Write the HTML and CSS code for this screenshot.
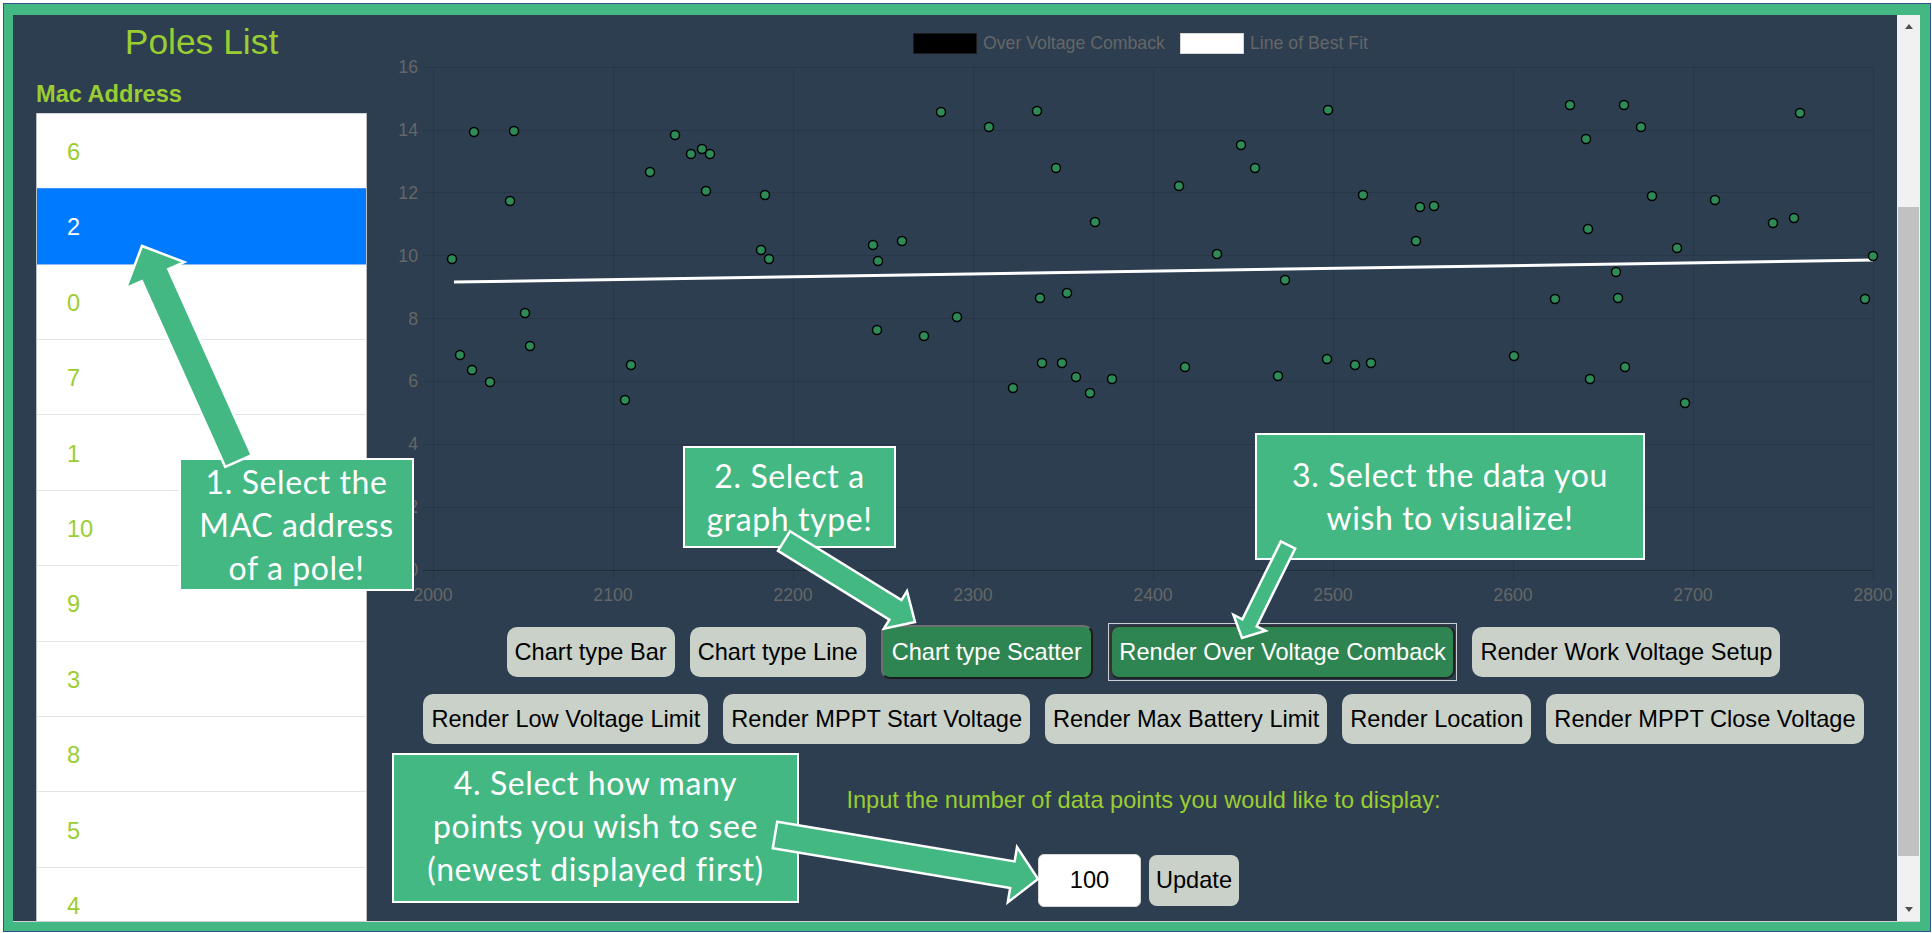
FILE: index.html
```html
<!DOCTYPE html>
<html lang="en">
<head>
<meta charset="utf-8">
<title>Poles List</title>
<link rel="stylesheet" href="styles.css">
</head>
<body>
<div class="frame">
  <div class="screen">
    <aside class="sidebar">
      <h2 class="title">Poles List</h2>
      <h3 class="mac-label">Mac Address</h3>
      <ul class="poles">
        <li class="pole">6</li>
        <li class="pole active">2</li>
        <li class="pole">0</li>
        <li class="pole">7</li>
        <li class="pole">1</li>
        <li class="pole">10</li>
        <li class="pole">9</li>
        <li class="pole">3</li>
        <li class="pole">8</li>
        <li class="pole">5</li>
        <li class="pole">4</li>
      </ul>
    </aside>
    <main class="main">
      <svg class="chart" width="1507" height="608" viewBox="0 0 1507 608">
        <g class="legend">
          <rect class="lg-black" x="523.5" y="18.5" width="63" height="20"/>
          <text class="tick" x="593" y="34">Over Voltage Comback</text>
          <rect class="lg-white" x="790.5" y="18.5" width="63" height="20"/>
          <text class="tick" x="860" y="34">Line of Best Fit</text>
        </g>
        <g class="grid">
          <line x1="33" y1="52.5" x2="1483" y2="52.5"/>
          <line x1="33" y1="115.5" x2="1483" y2="115.5"/>
          <line x1="33" y1="177.5" x2="1483" y2="177.5"/>
          <line x1="33" y1="240.5" x2="1483" y2="240.5"/>
          <line x1="33" y1="303.5" x2="1483" y2="303.5"/>
          <line x1="33" y1="366.5" x2="1483" y2="366.5"/>
          <line x1="33" y1="429.5" x2="1483" y2="429.5"/>
          <line x1="33" y1="492.5" x2="1483" y2="492.5"/>
          <line x1="43.5" y1="52" x2="43.5" y2="565"/>
          <line x1="223.5" y1="52" x2="223.5" y2="565"/>
          <line x1="403.5" y1="52" x2="403.5" y2="565"/>
          <line x1="583.5" y1="52" x2="583.5" y2="565"/>
          <line x1="763.5" y1="52" x2="763.5" y2="565"/>
          <line x1="943.5" y1="52" x2="943.5" y2="565"/>
          <line x1="1123.5" y1="52" x2="1123.5" y2="565"/>
          <line x1="1303.5" y1="52" x2="1303.5" y2="565"/>
          <line x1="1483.5" y1="52" x2="1483.5" y2="565"/>
        </g>
        <line class="axis" x1="33" y1="555.5" x2="1483" y2="555.5"/>
        <g class="ylabels">
          <text class="tick" x="28" y="58">16</text>
          <text class="tick" x="28" y="121">14</text>
          <text class="tick" x="28" y="184">12</text>
          <text class="tick" x="28" y="247">10</text>
          <text class="tick" x="28" y="310">8</text>
          <text class="tick" x="28" y="372">6</text>
          <text class="tick" x="28" y="435">4</text>
          <text class="tick" x="28" y="498">2</text>
          <text class="tick" x="28" y="561">0</text>
        </g>
        <g class="xlabels">
          <text class="tick" x="43" y="586">2000</text>
          <text class="tick" x="223" y="586">2100</text>
          <text class="tick" x="403" y="586">2200</text>
          <text class="tick" x="583" y="586">2300</text>
          <text class="tick" x="763" y="586">2400</text>
          <text class="tick" x="943" y="586">2500</text>
          <text class="tick" x="1123" y="586">2600</text>
          <text class="tick" x="1303" y="586">2700</text>
          <text class="tick" x="1483" y="586">2800</text>
        </g>
        <g class="points">
          <circle cx="62" cy="244" r="4.5"/><circle cx="70" cy="340" r="4.5"/><circle cx="82" cy="355" r="4.5"/>
          <circle cx="84" cy="117" r="4.5"/><circle cx="100" cy="367" r="4.5"/><circle cx="120" cy="186" r="4.5"/>
          <circle cx="124" cy="116" r="4.5"/><circle cx="135" cy="298" r="4.5"/><circle cx="140" cy="331" r="4.5"/>
          <circle cx="235" cy="385" r="4.5"/><circle cx="241" cy="350" r="4.5"/><circle cx="260" cy="157" r="4.5"/>
          <circle cx="285" cy="120" r="4.5"/><circle cx="301" cy="139" r="4.5"/><circle cx="312" cy="134" r="4.5"/>
          <circle cx="320" cy="139" r="4.5"/><circle cx="316" cy="176" r="4.5"/><circle cx="371" cy="235" r="4.5"/>
          <circle cx="375" cy="180" r="4.5"/><circle cx="379" cy="244" r="4.5"/><circle cx="483" cy="230" r="4.5"/>
          <circle cx="487" cy="315" r="4.5"/><circle cx="488" cy="246" r="4.5"/><circle cx="512" cy="226" r="4.5"/>
          <circle cx="534" cy="321" r="4.5"/><circle cx="551" cy="97" r="4.5"/><circle cx="567" cy="302" r="4.5"/>
          <circle cx="599" cy="112" r="4.5"/><circle cx="623" cy="373" r="4.5"/><circle cx="647" cy="96" r="4.5"/>
          <circle cx="650" cy="283" r="4.5"/><circle cx="652" cy="348" r="4.5"/><circle cx="666" cy="153" r="4.5"/>
          <circle cx="672" cy="348" r="4.5"/><circle cx="677" cy="278" r="4.5"/><circle cx="686" cy="362" r="4.5"/>
          <circle cx="700" cy="378" r="4.5"/><circle cx="705" cy="207" r="4.5"/><circle cx="722" cy="364" r="4.5"/>
          <circle cx="789" cy="171" r="4.5"/><circle cx="795" cy="352" r="4.5"/><circle cx="827" cy="239" r="4.5"/>
          <circle cx="851" cy="130" r="4.5"/><circle cx="865" cy="153" r="4.5"/><circle cx="888" cy="361" r="4.5"/>
          <circle cx="895" cy="265" r="4.5"/><circle cx="938" cy="95" r="4.5"/><circle cx="937" cy="344" r="4.5"/>
          <circle cx="965" cy="350" r="4.5"/><circle cx="973" cy="180" r="4.5"/><circle cx="981" cy="348" r="4.5"/>
          <circle cx="1026" cy="226" r="4.5"/><circle cx="1030" cy="192" r="4.5"/><circle cx="1044" cy="191" r="4.5"/>
          <circle cx="1124" cy="341" r="4.5"/><circle cx="1165" cy="284" r="4.5"/><circle cx="1180" cy="90" r="4.5"/>
          <circle cx="1196" cy="124" r="4.5"/><circle cx="1198" cy="214" r="4.5"/><circle cx="1200" cy="364" r="4.5"/>
          <circle cx="1226" cy="257" r="4.5"/><circle cx="1228" cy="283" r="4.5"/><circle cx="1234" cy="90" r="4.5"/>
          <circle cx="1235" cy="352" r="4.5"/><circle cx="1251" cy="112" r="4.5"/><circle cx="1262" cy="181" r="4.5"/>
          <circle cx="1287" cy="233" r="4.5"/><circle cx="1295" cy="388" r="4.5"/><circle cx="1325" cy="185" r="4.5"/>
          <circle cx="1383" cy="208" r="4.5"/><circle cx="1404" cy="203" r="4.5"/><circle cx="1410" cy="98" r="4.5"/>
          <circle cx="1475" cy="284" r="4.5"/>
        </g>
        <line class="fit" x1="64" y1="267" x2="1483" y2="245"/>
        <circle class="pt-last" cx="1483" cy="241" r="4.5"/>
      </svg>

      <div class="btn-row row-one">
        <button class="btn">Chart type Bar</button>
        <button class="btn">Chart type Line</button>
        <button class="btn btn-on">Chart type Scatter</button>
        <span class="focus-ring"><button class="btn btn-on btn-focus">Render Over Voltage Comback</button></span>
        <button class="btn">Render Work Voltage Setup</button>
      </div>
      <div class="btn-row row-two">
        <button class="btn">Render Low Voltage Limit</button>
        <button class="btn">Render MPPT Start Voltage</button>
        <button class="btn">Render Max Battery Limit</button>
        <button class="btn">Render Location</button>
        <button class="btn">Render MPPT Close Voltage</button>
      </div>
      <p class="prompt">Input the number of data points you would like to display:</p>
      <div class="input-row">
        <input class="count" type="text" value="100">
        <button class="btn btn-update">Update</button>
      </div>
    </main>
    <div class="scrollbar">
      <div class="sb-btn"><span class="tri-up"></span></div>
      <div class="sb-track"><div class="sb-thumb"></div></div>
      <div class="sb-btn"><span class="tri-down"></span></div>
    </div>
  </div>
</div>

<div class="callout c1">1. Select the<br>MAC address<br>of a pole!</div>
<div class="callout c2">2. Select a<br>graph type!</div>
<div class="callout c3">3. Select the data you<br>wish to visualize!</div>
<div class="callout c4">4. Select how many<br>points you wish to see<br>(newest displayed first)</div>

<svg class="arrows" width="1932" height="933" viewBox="0 0 1932 933">
  <polygon transform="translate(238.5 461) rotate(-114.17)" points="0,-14.5 203.7,-14.5 203.7,-32 235.7,0 203.7,32 203.7,14.5 0,14.5"/>
  <polygon transform="translate(784 541) rotate(31.73)" points="0,-11.5 131,-11.5 131,-22 154,0 131,22 131,11.5 0,11.5"/>
  <polygon transform="translate(1288 545) rotate(116.32)" points="0,-8 86.8,-8 86.8,-18 103.8,0 86.8,18 86.8,8 0,8"/>
  <polygon transform="translate(775 835) rotate(9.5)" points="0,-13.5 240.7,-13.5 240.7,-28 266.7,0 240.7,28 240.7,13.5 0,13.5"/>
</svg>
</body>
</html>
```

FILE: styles.css
```css
* { box-sizing: border-box; }

html, body {
  margin: 0;
  padding: 0;
}

body {
  width: 1932px;
  height: 933px;
  overflow: hidden;
  position: relative;
  background: #ffffff;
  font-family: "Liberation Sans", Arial, sans-serif;
}

.frame {
  margin: 3px 0 0 3px;
  width: 1928px;
  height: 929px;
  border: 1px solid #2f528f;
  background: #43b883;
  padding: 11px 10px 9px 9px;
}

.screen {
  display: flex;
  height: 907px;
  background: #2c3e50;
  border-bottom: 1px solid #cfd3d6;
  overflow: hidden;
}

/* ---------- sidebar ---------- */
.sidebar {
  width: 377px;
  flex: none;
  padding: 0 23px;
  overflow: hidden;
}

.title {
  margin: 6.6px 0 0;
  text-align: center;
  font-weight: normal;
  font-size: 35.4px;
  line-height: 40px;
  color: #9acd32;
}

.mac-label {
  margin: 19px 0 0;
  font-size: 23.6px;
  line-height: 27px;
  font-weight: bold;
  color: #9acd32;
}

.poles {
  list-style: none;
  margin: 5.3px 0 0;
  padding: 0;
  background: #fff;
  border-left: 1px solid #b9bec3;
  border-right: 1px solid #b9bec3;
}

.pole {
  height: 75.4px;
  display: flex;
  align-items: center;
  padding: 3px 0 0 30px;
  border-top: 1px solid #e4e4e4;
  font-size: 23.6px;
  line-height: 27px;
  color: #9acd32;
  background: #fff;
}

.pole:first-child { border-top-color: #d0d4d8; }

.pole.active {
  background: #007bff;
  color: #fff;
  border-top-color: #3d95fb;
}

.pole.active + .pole { border-top-color: #8bbcf5; }

/* ---------- main ---------- */
.main {
  width: 1507px;
  flex: none;
  display: flex;
  flex-direction: column;
  align-items: center;
}

.chart {
  display: block;
  flex: none;
}

.tick {
  font-family: "Liberation Sans", Arial, sans-serif;
  font-size: 17.7px;
  fill: #666666;
}

.ylabels .tick { text-anchor: end; }
.xlabels .tick { text-anchor: middle; }

.lg-black { fill: #000; stroke: #1c1c1c; stroke-width: 1; }
.lg-white { fill: #fff; stroke: #d6d6d6; stroke-width: 1; }

.grid line {
  stroke: rgba(0, 0, 0, 0.1);
  stroke-width: 1;
}

.axis {
  stroke: rgba(0, 0, 0, 0.28);
  stroke-width: 1;
}

.points circle,
.pt-last {
  fill: #2e8b57;
  stroke: #000;
  stroke-width: 1.5;
}

.fit {
  stroke: #ffffff;
  stroke-width: 3;
}

.btn-row {
  display: flex;
  justify-content: center;
  align-items: center;
  gap: 15px;
  flex: none;
}

.row-one { height: 58px; }
.row-two { height: 50px; margin-top: 13px; }

.btn {
  height: 50px;
  padding: 0 8px;
  border: 0;
  border-radius: 10px;
  background: #c9d1c8;
  color: #000;
  font-family: "Liberation Sans", Arial, sans-serif;
  font-size: 23.6px;
  line-height: 27px;
  white-space: nowrap;
}

.btn-on {
  height: 54px;
  padding: 0 9px;
  background: #2f8551;
  color: #fff;
  border: 2px solid;
  border-color: #6f6f6f #1c1c1c #1c1c1c #6f6f6f;
  border-radius: 9px;
}

.focus-ring {
  display: flex;
  border: 1px solid #cdd0d2;
  padding: 1px;
}

.btn-focus {
  padding: 0 7.5px;
  border-color: #333 #222 #222 #333;
}

.prompt {
  margin: 42px 0 0;
  font-size: 23.6px;
  line-height: 28px;
  color: #9acd32;
  flex: none;
}

.input-row {
  display: flex;
  align-items: center;
  height: 53px;
  margin: 40px 10px 0 0;
  gap: 8px;
  flex: none;
}

.count {
  width: 103px;
  height: 53px;
  border: 1px solid #d8d8d8;
  border-radius: 6px;
  background: #fff;
  text-align: center;
  font-family: "Liberation Sans", Arial, sans-serif;
  font-size: 23.6px;
  color: #000;
  padding: 0;
}

.btn-update {
  height: 51px;
  padding: 0 7px;
  border-radius: 8px;
}

/* ---------- scrollbar ---------- */
.scrollbar {
  width: 23px;
  flex: none;
  background: #f1f1f1;
  display: flex;
  flex-direction: column;
}

.sb-btn {
  height: 23px;
  flex: none;
  display: flex;
  align-items: center;
  justify-content: center;
}

.sb-track {
  flex: 1;
  padding: 169px 1px 0;
}

.sb-thumb {
  height: 649px;
  background: #c1c1c1;
}

.tri-up {
  width: 0;
  height: 0;
  border-left: 4.5px solid transparent;
  border-right: 4.5px solid transparent;
  border-bottom: 5px solid #505050;
}

.tri-down {
  width: 0;
  height: 0;
  border-left: 4.5px solid transparent;
  border-right: 4.5px solid transparent;
  border-top: 5px solid #505050;
}

/* ---------- annotations ---------- */
.callout {
  position: absolute;
  background: #43b883;
  border: 2px solid #ffffff;
  color: #ffffff;
  text-align: center;
  font-family: Lato, "Open Sans", sans-serif;
  font-size: 32px;
  letter-spacing: 0.6px;
  line-height: 43px;
  white-space: nowrap;
}

.c1 { left: 179px; top: 458px; width: 235px; padding: 0; }
.c2 { left: 683px; top: 446px; width: 213px; padding: 6px 0; }
.c3 { left: 1255px; top: 433px; width: 390px; padding: 18px 0 19px; }
.c4 { left: 392px; top: 753px; width: 407px; padding: 6px 0 11px; }

.arrows {
  position: absolute;
  left: 0;
  top: 0;
  pointer-events: none;
}

.arrows polygon {
  fill: #43b883;
  stroke: #ffffff;
  stroke-width: 2.5;
  stroke-linejoin: miter;
}
```
